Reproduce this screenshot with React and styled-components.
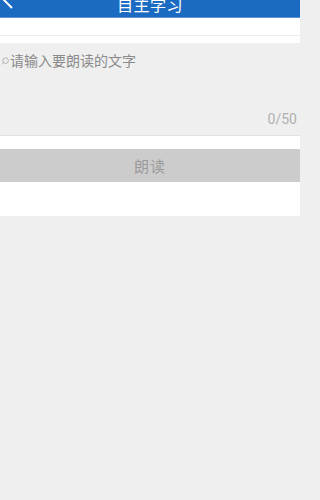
import React from "react";
import styled, { createGlobalStyle } from "styled-components";

const GlobalStyle = createGlobalStyle`
  *, *::before, *::after {
    box-sizing: border-box;
  }
  html, body {
    margin: 0;
    padding: 0;
    background: #efefef;
    font-family: "Roboto", "Noto Sans CJK SC", sans-serif;
  }
`;

export default function App() {
  return (
    <>
      <GlobalStyle />
      <Page>
        <Header>
          <HeaderBar>
            <BackButton>
              <svg width="14" height="22" viewBox="0 0 14 22">
                <path d="M12 1 L2 11 L12 21" fill="none" stroke="#fff" strokeWidth="2" />
              </svg>
            </BackButton>
            <Title>自主学习</Title>
          </HeaderBar>
        </Header>
        <Spacer>
          <Divider />
        </Spacer>
        <InputArea>
          <Placeholder>
            <svg width="8" height="8" viewBox="0 0 8 8">
              <circle cx="4.6" cy="3.6" r="2.8" fill="none" stroke="#aaa" strokeWidth="0.9" />
              <path d="M2.6 5.6 L0.8 7.4" stroke="#aaa" strokeWidth="0.9" />
            </svg>
            请输入要朗读的文字
          </Placeholder>
          <Counter>0/50</Counter>
        </InputArea>
        <Gap />
        <ReadButton>朗读</ReadButton>
        <Gap $height={34} />
      </Page>
    </>
  );
}

const Page = styled.div`
  width: 300px;
  display: flex;
  flex-direction: column;
  min-height: 500px;
  background: #efefef;
`;

const Header = styled.header`
  height: 18px;
  overflow: hidden;
  display: flex;
  flex-direction: column;
  justify-content: flex-end;
  background: #1c6bc2;
  border-bottom: 1px solid #5b93d4;
`;

const HeaderBar = styled.div`
  flex-shrink: 0;
  height: 22px;
  display: flex;
  align-items: center;
  justify-content: center;
  position: relative;
`;

const BackButton = styled.div`
  position: absolute;
  left: 0;
  top: -8px;
  display: flex;
`;

const Title = styled.h1`
  margin: 0;
  color: #fff;
  font-size: 16px;
  font-weight: 400;
  letter-spacing: 0.5px;
  line-height: 16px;
`;

const Spacer = styled.div`
  height: 25px;
  background: #fff;
  display: flex;
  flex-direction: column;
  padding-top: 17px;
`;

const Divider = styled.div`
  height: 1px;
  background: #ececec;
`;

const InputArea = styled.div`
  height: 93px;
  background: #efefef;
  border-bottom: 1px solid #e2e2e2;
  display: flex;
  flex-direction: column;
  justify-content: space-between;
  padding: 10px 3px 8px 1px;
`;

const Placeholder = styled.div`
  display: flex;
  align-items: center;
  gap: 1px;
  color: #8a8a8a;
  font-size: 14px;
  line-height: 16px;
`;

const Counter = styled.div`
  align-self: flex-end;
  color: #b0b0b0;
  font-size: 14px;
  line-height: 16px;
`;

const Gap = styled.div`
  height: ${(p) => p.$height || 13}px;
  background: #fff;
`;

const ReadButton = styled.div`
  height: 33px;
  background: #cccccc;
  color: #9a9a9a;
  font-size: 15px;
  display: flex;
  align-items: center;
  justify-content: center;
  letter-spacing: 1px;
`;
